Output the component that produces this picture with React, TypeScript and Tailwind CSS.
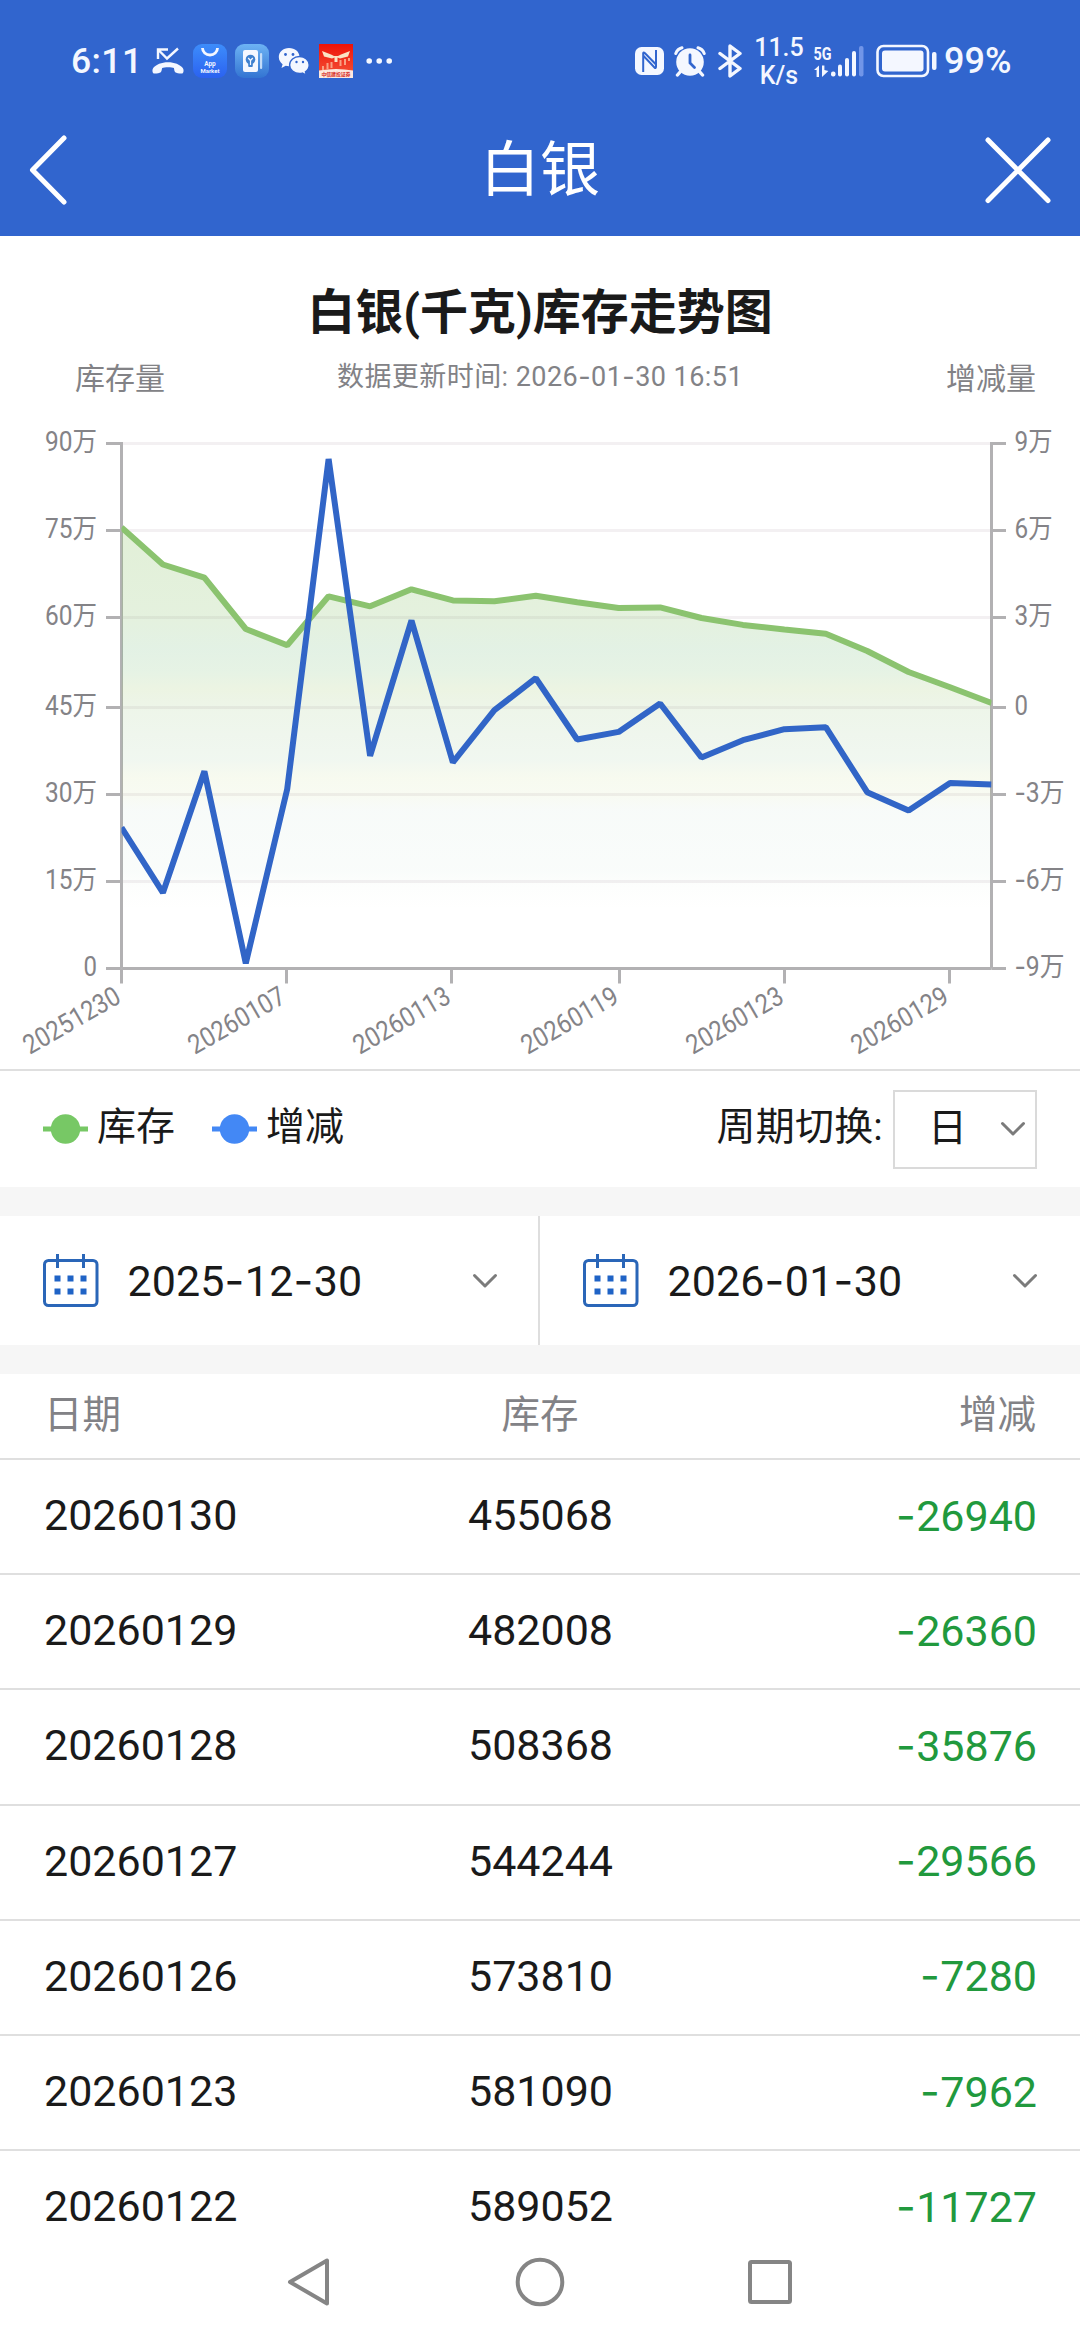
import { useState } from "react";

interface InventoryRow {
  date: string;
  stock: number;
  change: number;
}

const ROWS: InventoryRow[] = [
  { date: "20260130", stock: 455068, change: -26940 },
  { date: "20260129", stock: 482008, change: -26360 },
  { date: "20260128", stock: 508368, change: -35876 },
  { date: "20260127", stock: 544244, change: -29566 },
  { date: "20260126", stock: 573810, change: -7280 },
  { date: "20260123", stock: 581090, change: -7962 },
  { date: "20260122", stock: 589052, change: -11727 },
];

const STOCK = [
  756000, 692600, 670000, 582000, 554000, 638000, 621000, 650000, 631000, 629600, 639000,
  628000, 618000, 619000, 600779, 589052, 581090, 573810, 544244, 508368, 482008, 455068,
];

const CHANGE = [
  -41660, -64000, -22400, -88200, -28500, 84700, -17100, 29300, -19300, -1440, 9530,
  -11500, -8880, 850, -17660, -11727, -7962, -7280, -29566, -35876, -26360, -26940,
];

const LEFT_LABELS = ["90万", "75万", "60万", "45万", "30万", "15万", "0"];
const RIGHT_LABELS = ["9万", "6万", "3万", "0", "-3万", "-6万", "-9万"];
const X_LABELS = ["20251230", "20260107", "20260113", "20260119", "20260123", "20260129"];

const X0 = 121.5;
const X1 = 991.5;
const Y0 = 43.5;
const PLOT_H = 525;
const STEP = (X1 - X0) / 21;

// ticks snap to whole css pixels at 3x density
const snap = (v: number) => Math.round(v / 3) * 3;

const stockY = (v: number) => Y0 + PLOT_H - (v / 900000) * PLOT_H;
const changeY = (v: number) => Y0 + PLOT_H / 2 - (v / 90000) * (PLOT_H / 2);

const toPoints = (data: number[], scale: (v: number) => number) =>
  data.map((v, i) => `${(X0 + i * STEP).toFixed(1)},${scale(v).toFixed(1)}`).join(" ");

// digits with the wide dash of the numeric face
function Num({ children }: { children: string }) {
  return (
    <>
      {children.split(/(-)/).map((part, i) =>
        part === "-" ? (
          <span key={i} className="font-['Inter'] tracking-[0.5px]">
            -
          </span>
        ) : (
          part
        ),
      )}
    </>
  );
}

function StatusBar() {
  return (
    <div className="flex h-[104px] items-center pt-[18px] text-[#f4f7ff]">
      <span className="ml-[71px] w-[81px] text-[35.5px] font-medium leading-[42px] tracking-[0.4px]">6:11</span>

      {/* missed call */}
      <svg className="h-[28px] w-[32px]" viewBox="0 0 32 28" fill="none">
        <path d="M6 12V2.5H16M7 3.5L15 11.5L26 1.5" stroke="currentColor" strokeWidth="2.4" />
        <path
          d="M16 15.2c6.5 0 12 2.3 14.800 5.800 1.200 1.600 1 4.500-.4 5.400-1.400.7-5.900-.4-7.200-1.200-1-.7-.9-3.200-1.300-4.100-1.600-1-9.900-1-11.700 0-.5.900-.4 3.400-1.400 4.100-1.300.8-5.800 1.900-7.200 1.200-1.400-.9-1.600-3.800-.4-5.400C4 17.500 9.500 15.200 16 15.200z"
          fill="currentColor"
        />
      </svg>

      {/* app market */}
      <svg className="ml-[9px] h-[34px] w-[34px]" viewBox="0 0 34 34">
        <defs>
          <linearGradient id="market" x1="0" y1="0" x2="0" y2="1">
            <stop offset="0" stopColor="#3d8dfb" />
            <stop offset="1" stopColor="#2b62f0" />
          </linearGradient>
        </defs>
        <rect width="34" height="34" rx="9" fill="url(#market)" />
        <path d="M9.500 4a7.500 7 0 0 0 15 0" fill="none" stroke="#f4f7ff" strokeWidth="2.800" />
        <text x="17" y="21.500" textAnchor="middle" fill="#f4f7ff" className="font-['Roboto'] text-[6.500px] font-bold">
          App
        </text>
        <text x="17" y="28.500" textAnchor="middle" fill="#f4f7ff" className="font-['Roboto'] text-[6px] font-bold">
          Market
        </text>
      </svg>

      {/* tips */}
      <svg className="ml-[8px] h-[34px] w-[34px]" viewBox="0 0 34 34">
        <defs>
          <linearGradient id="tips" x1="0" y1="0" x2="0" y2="1">
            <stop offset="0" stopColor="#6db3f4" />
            <stop offset="1" stopColor="#3374d2" />
          </linearGradient>
        </defs>
        <rect width="34" height="34" rx="9" fill="url(#tips)" />
        <rect x="8" y="6" width="15" height="22" rx="2" fill="#f4f7ff" />
        <rect x="25" y="9" width="2.200" height="16" rx="1" fill="#c3dcf8" />
        <circle cx="15.500" cy="15.500" r="4.800" fill="#3f80cf" />
        <rect x="13.200" y="19" width="4.600" height="4" rx="1" fill="#3f80cf" />
        <path d="M13.200 14l2.300 2.500 2.300-2.500M15.500 16.500V21" fill="none" stroke="#f4f7ff" strokeWidth="1.200" />
      </svg>

      {/* wechat */}
      <svg className="ml-[9px] h-[28px] w-[32px]" viewBox="0 0 32 28">
        <path d="M11 1C5 1 .8 5 .8 10c0 3 1.500 5.500 3.800 7.200L3.500 21l4.200-2.200c1 .3 2.200.4 3.300.4 6 0 10.500-4 10.500-9.200S17 1 11 1z" fill="#f4f7ff" />
        <path
          d="M21.500 9.500c-5.400 0-9.900 3.600-9.900 8.500s4.500 8.500 9.900 8.500c1 0 2-.1 2.900-.4l4 2-1-3.300c2.300-1.500 3.800-4 3.800-6.800 0-4.900-4.300-8.500-9.700-8.500z"
          fill="#f4f7ff"
          stroke="#3165ce"
          strokeWidth="1.400"
        />
        <circle cx="7.500" cy="7.500" r="1.400" fill="#3165ce" />
        <circle cx="15" cy="7.500" r="1.400" fill="#3165ce" />
        <circle cx="18.500" cy="15" r="1.200" fill="#3165ce" />
        <circle cx="25" cy="15" r="1.200" fill="#3165ce" />
      </svg>

      {/* broker app */}
      <svg className="ml-[9px] h-[34px] w-[34px]" viewBox="0 0 34 34">
        <defs>
          <linearGradient id="broker" x1="0" y1="0" x2="0" y2="1">
            <stop offset="0" stopColor="#ee1208" />
            <stop offset="1" stopColor="#f4573a" />
          </linearGradient>
        </defs>
        <rect width="34" height="34" fill="url(#broker)" />
        <path d="M3 7l9 3.500 3 1.500h4l3-1.500L31 7l-2 5.500-8 2-2.500-1V18h-3v-4.500l-2.500 1-8-2z" fill="#fbe3c4" />
        <path d="M4 22v4M8.500 19v6M12.500 18v6M21.500 16v6M26 15v6M30 14v3" stroke="#f9a083" strokeWidth="2" />
        <path d="M0 26.500Q17 23.500 34 26.500V34H0z" fill="#fde9df" />
        <text x="17" y="32" textAnchor="middle" textLength="29" fill="#d5281d" className="font-['Noto_Sans_CJK_SC'] text-[5px] font-bold">
          中信建投证券
        </text>
      </svg>

      <svg className="ml-[13px] h-[8px] w-[26px]" viewBox="0 0 26 8" fill="currentColor">
        <circle cx="3.200" cy="4" r="2.800" />
        <circle cx="13.200" cy="4" r="2.800" />
        <circle cx="23.200" cy="4" r="2.800" />
      </svg>

      {/* nfc */}
      <svg className="ml-auto h-[28px] w-[29px]" viewBox="0 0 29 28">
        <rect width="29" height="28" rx="6.500" fill="currentColor" />
        <path
          d="M8.200 25V8.500L19.500 20.500Q21 22 21 19.500V3M8.200 8.500V6.500Q8.200 4.500 10 6.300L21 17.500"
          fill="none"
          stroke="#3165ce"
          strokeWidth="2"
        />
      </svg>

      {/* alarm */}
      <svg className="ml-[10px] h-[31px] w-[32px]" viewBox="0 0 32 31" fill="none" stroke="currentColor" strokeLinecap="round">
        <circle cx="16" cy="16" r="13.800" fill="currentColor" stroke="none" />
        <path d="M1.800 7.500A9 9 0 0 1 8 1.800M30.200 7.500A9 9 0 0 0 24 1.800" strokeWidth="3" />
        <path d="M7 25l-3.500 4M25 25l3.500 4" strokeWidth="3.400" />
        <path d="M16 9v8l4.500 4.500" stroke="#3165ce" strokeWidth="2.800" />
      </svg>

      {/* bluetooth */}
      <svg className="ml-[12px] h-[34px] w-[24px]" viewBox="0 0 24 34" fill="none" stroke="currentColor" strokeWidth="3.400" strokeLinejoin="round" strokeLinecap="round">
        <path d="M2 9.500L22 24.500L12 32V2L22 9.500L2 24.500" />
      </svg>

      <div className="ml-[11px] flex w-[52px] flex-col items-center text-[25px] font-medium leading-[29px]">
        <span className="-mb-[1px]">11.5</span>
        <span>K/s</span>
      </div>

      {/* signal */}
      <svg className="ml-[8px] h-[34px] w-[52px]" viewBox="0 0 52 34" fill="currentColor">
        <text x="0.500" y="15.500" textLength="18" lengthAdjust="spacingAndGlyphs" className="font-['Roboto'] text-[19px] font-bold">
          5G
        </text>
        <path d="M1 26l5-4.500V33H3.600v-7zM9 21.500h2.400V26l4 1-6.400 6z" />
        <rect x="18" y="27.500" width="4.500" height="5" rx="2" />
        <rect x="25" y="20.500" width="4" height="12" rx="2" />
        <rect x="32" y="14" width="4" height="18.500" rx="2" />
        <rect x="39" y="7" width="4" height="25.500" rx="2" />
        <rect x="46" y="2" width="4.500" height="30.500" rx="2" fill="#7195e8" />
      </svg>

      {/* battery */}
      <svg className="ml-[11px] h-[34px] w-[61px]" viewBox="0 0 61 34">
        <rect x="1.500" y="2" width="50.500" height="30" rx="6" fill="none" stroke="currentColor" strokeWidth="2.600" />
        <rect x="6" y="6.500" width="41.500" height="21" rx="3" fill="currentColor" />
        <rect x="56" y="8" width="4.500" height="18" rx="2" fill="currentColor" />
      </svg>
      <span className="ml-[7px] mr-[65px] w-[71px] whitespace-nowrap text-[36px] font-medium leading-[42px]">99%</span>
    </div>
  );
}

function NavHeader() {
  return (
    <div className="flex h-[132px] items-center justify-between pl-[29px] pr-[29px]">
      <svg className="h-[72px] w-[66px]" viewBox="0 0 66 72" fill="none" stroke="#fff" strokeWidth="5" strokeLinecap="round" strokeLinejoin="round">
        <path d="M35 4L3.500 36L35 68" />
      </svg>
      <h1 className="pt-[1px] text-[60px] leading-none text-white">白银</h1>
      <svg className="h-[68px] w-[66px]" viewBox="0 0 66 68" fill="none" stroke="#fff" strokeWidth="5" strokeLinecap="round">
        <path d="M3 4L63 64.500M63 4L3 64.500" />
      </svg>
    </div>
  );
}

function TrendChart() {
  const stockPoints = toPoints(STOCK, stockY);
  const bottom = Y0 + PLOT_H;
  const ticks = LEFT_LABELS.map((_, k) => Y0 + snap((k * PLOT_H) / 6));

  return (
    <svg className="block h-[669px] w-[1080px]" viewBox="0 0 1080 669">
      <defs>
        <linearGradient id="area" gradientUnits="userSpaceOnUse" x1="0" y1="126" x2="0" y2="568">
          <stop offset="0" stopColor="#84bf58" stopOpacity="0.24" />
          <stop offset="0.2" stopColor="#80bc60" stopOpacity="0.21" />
          <stop offset="0.28" stopColor="#6cb874" stopOpacity="0.19" />
          <stop offset="0.33" stopColor="#74bc6c" stopOpacity="0.18" />
          <stop offset="0.37" stopColor="#90c058" stopOpacity="0.17" />
          <stop offset="0.42" stopColor="#84b968" stopOpacity="0.14" />
          <stop offset="0.53" stopColor="#7cb878" stopOpacity="0.11" />
          <stop offset="0.57" stopColor="#a8c850" stopOpacity="0.09" />
          <stop offset="0.61" stopColor="#a8c860" stopOpacity="0.08" />
          <stop offset="0.64" stopColor="#80b898" stopOpacity="0.06" />
          <stop offset="0.78" stopColor="#80c0a0" stopOpacity="0.045" />
          <stop offset="0.82" stopColor="#a0d0a0" stopOpacity="0.02" />
          <stop offset="0.87" stopColor="#c0d0a0" stopOpacity="0" />
        </linearGradient>
        <clipPath id="plot">
          <rect x={X0} y="0" width={X1 - X0} height={bottom + 3} />
        </clipPath>
      </defs>

      {ticks.slice(0, 6).map((y) => (
        <line key={y} x1={X0} x2={X1} y1={y} y2={y} stroke="#f3f0f2" strokeWidth="3" />
      ))}

      <g stroke="#b2b1b3" strokeWidth="3">
        <path d={`M${X0} ${Y0 - 1.5}V${bottom}M${X1} ${Y0 - 1.5}V${bottom}`} />
        {ticks.map((y) => (
          <path key={y} d={`M${X0 - 15.5} ${y}H${X0}M${X1} ${y}H${X1 + 14.5}`} />
        ))}
        {X_LABELS.map((d, i) => (
          <line key={d} x1={X0 + snap(i * 4 * STEP)} x2={X0 + snap(i * 4 * STEP)} y1={bottom} y2={bottom + 15} />
        ))}
        <line x1={X0} x2={X1} y1={bottom} y2={bottom} />
      </g>

      <g clipPath="url(#plot)" strokeLinejoin="bevel" strokeWidth="6">
        <polygon points={`${X0},${bottom} ${stockPoints} ${X1},${bottom}`} fill="url(#area)" />
        <polyline points={stockPoints} fill="none" stroke="#8bc36f" />
        <polyline points={toPoints(CHANGE, changeY)} fill="none" stroke="#3165c7" />
      </g>

      <g fill="#848387" className="font-['Roboto','Noto_Sans_CJK_SC',sans-serif] text-[27px]">
        {LEFT_LABELS.map((label, i) => (
          <text
            key={label}
            x="97"
            y={ticks[i] + 7}
            textAnchor="end"
            textLength={label === "0" ? 13.5 : 52}
            lengthAdjust="spacingAndGlyphs"
          >
            {label}
          </text>
        ))}
        {RIGHT_LABELS.map((label, i) => (
          <text
            key={label}
            x="1014.500"
            y={ticks[i] + 7}
            textLength={label === "0" ? 13.5 : label.startsWith("-") ? 50 : 38}
            lengthAdjust="spacingAndGlyphs"
          >
            {label.startsWith("-") && <tspan className="font-['Inter']">-</tspan>}
            {label.replace("-", "")}
          </text>
        ))}
        {X_LABELS.map((label, i) => {
          const x = X0 + snap(i * 4 * STEP) + 1;
          const y = bottom + 33;
          return (
            <text
              key={label}
              x={x}
              y={y}
              textAnchor="end"
              textLength="107"
              lengthAdjust="spacingAndGlyphs"
              transform={`rotate(-30 ${x} ${y})`}
            >
              {label}
            </text>
          );
        })}
      </g>
    </svg>
  );
}

function LegendItem({ label, color }: { label: string; color: string }) {
  return (
    <div className="flex items-center gap-[9px]">
      <svg className="h-[30px] w-[45px]" viewBox="0 0 45 30" fill={color}>
        <rect y="12.500" width="45" height="5" />
        <circle cx="22.500" cy="15" r="14.700" />
      </svg>
      <span className="pb-[4px] text-[39px] leading-[46px]">{label}</span>
    </div>
  );
}

function Chevron() {
  return (
    <svg className="h-[16px] w-[26px]" viewBox="0 0 26 16" fill="none" stroke="#7b7b7b" strokeWidth="3" strokeLinecap="round" strokeLinejoin="round">
      <path d="M2.500 2.500L13 13L23.500 2.500" />
    </svg>
  );
}

function DatePicker({ value }: { value: string }) {
  return (
    <button type="button" className="flex h-[129px] w-[540px] items-center pl-[43px] pr-[42px]">
      <svg className="h-[56px] w-[56px]" viewBox="0 0 56 56">
        <rect x="1.500" y="7.500" width="52.500" height="45" rx="4" fill="none" stroke="#2a66b8" strokeWidth="3" />
        <path d="M14.500 1V15M40.500 1V15" stroke="#2a66b8" strokeWidth="3" />
        <path d="M11.500 25.500h6M24.500 25.500h6M37.500 25.500h6M11.500 38.500h6M24.500 38.500h6M37.500 38.500h6" stroke="#1f63c6" strokeWidth="6" />
      </svg>
      <span className="ml-[28.5px] whitespace-nowrap pb-[1px] text-[43px] leading-[50px] tracking-[0.1px] text-[#1a1a1a]">
        <Num>{value}</Num>
      </span>
      <span className="ml-auto">
        <Chevron />
      </span>
    </button>
  );
}

function SystemNav() {
  return (
    <div className="flex h-[117px] items-center justify-between bg-white px-[286px] text-[#858585]">
      <svg className="h-[50px] w-[46px]" viewBox="0 0 46 50" fill="none" stroke="currentColor" strokeWidth="4" strokeLinejoin="round">
        <path d="M41 3.500V46.500L4 25z" />
      </svg>
      <svg className="ml-[4px] h-[50px] w-[50px]" viewBox="0 0 50 50" fill="none" stroke="currentColor" strokeWidth="4">
        <circle cx="25" cy="25" r="22.300" />
      </svg>
      <svg className="h-[50px] w-[50px]" viewBox="0 0 50 50" fill="none" stroke="currentColor" strokeWidth="4">
        <rect x="6" y="5" width="40" height="40" rx="1.500" />
      </svg>
    </div>
  );
}

export default function App() {
  const [period] = useState("日");

  return (
    <div className="flex h-[2340px] w-[1080px] flex-col overflow-hidden bg-white font-['Roboto','Noto_Sans_CJK_SC',sans-serif] text-[#1a1a1a]">
      <header className="h-[236px] shrink-0 bg-[#3165ce]">
        <StatusBar />
        <NavHeader />
      </header>

      <section className="h-[835px] shrink-0 border-b-2 border-[#dfdfdf]">
        <h2 className="pt-[47px] text-center text-[48px] font-bold leading-[60px]">白银(千克)库存走势图</h2>
        <div className="flex h-[57px] items-start justify-between pl-[75px] pr-[44px] pt-[16px] text-[#828286]">
          <span className="mt-[2px] w-[90px] text-[30px] leading-[36px]">库存量</span>
          <span className="-ml-[31px] whitespace-nowrap text-[27px] leading-[36px] tracking-[0.44px]">
            <Num>数据更新时间: 2026-01-30 16:51</Num>
          </span>
          <span className="mt-[2px] w-[90px] text-[30px] leading-[36px]">增减量</span>
        </div>
        <TrendChart />
      </section>

      <section className="flex h-[116px] shrink-0 items-center pl-[43px] pr-[43px]">
        <LegendItem label="库存" color="#77c865" />
        <div className="ml-[37px]">
          <LegendItem label="增减" color="#4388f5" />
        </div>
        <span className="ml-auto pb-[4px] text-[39px] leading-[46px] tracking-[0.2px]">周期切换:</span>
        <button type="button" className="ml-[10px] flex h-[79px] w-[144px] items-center justify-between border-2 border-[#dadada] pl-[33px] pr-[9px]">
          <span className="pb-[3px] text-[39px] leading-[46px]">{period}</span>
          <Chevron />
        </button>
      </section>

      <section className="flex shrink-0 border-y-[29px] border-[#f6f6f6]">
        <DatePicker value="2025-12-30" />
        <div className="-ml-[2px] w-[2px] bg-[#dedede]" />
        <DatePicker value="2026-01-30" />
      </section>

      <section className="h-[849px] shrink-0 overflow-hidden">
        <div className="grid h-[86px] grid-cols-3 items-center border-b-2 border-[#dfdfdf] pb-[2px] pl-[44px] pr-[44px] text-[38.5px] leading-[46px] text-[#828286]">
          <span>日期</span>
          <span className="text-center">库存</span>
          <span className="text-right">增减</span>
        </div>
        {ROWS.map((row) => (
          <div
            key={row.date}
            className="grid h-[115.2px] grid-cols-3 items-center border-b-2 border-[#dfdfdf] pb-[3px] pl-[44px] pr-[43px] text-[43px] leading-[50px]"
          >
            <span>{row.date}</span>
            <span className="text-center">{row.stock}</span>
            <span className="text-right text-[#21993d]">
              <Num>{String(row.change)}</Num>
            </span>
          </div>
        ))}
      </section>

      <SystemNav />
    </div>
  );
}
